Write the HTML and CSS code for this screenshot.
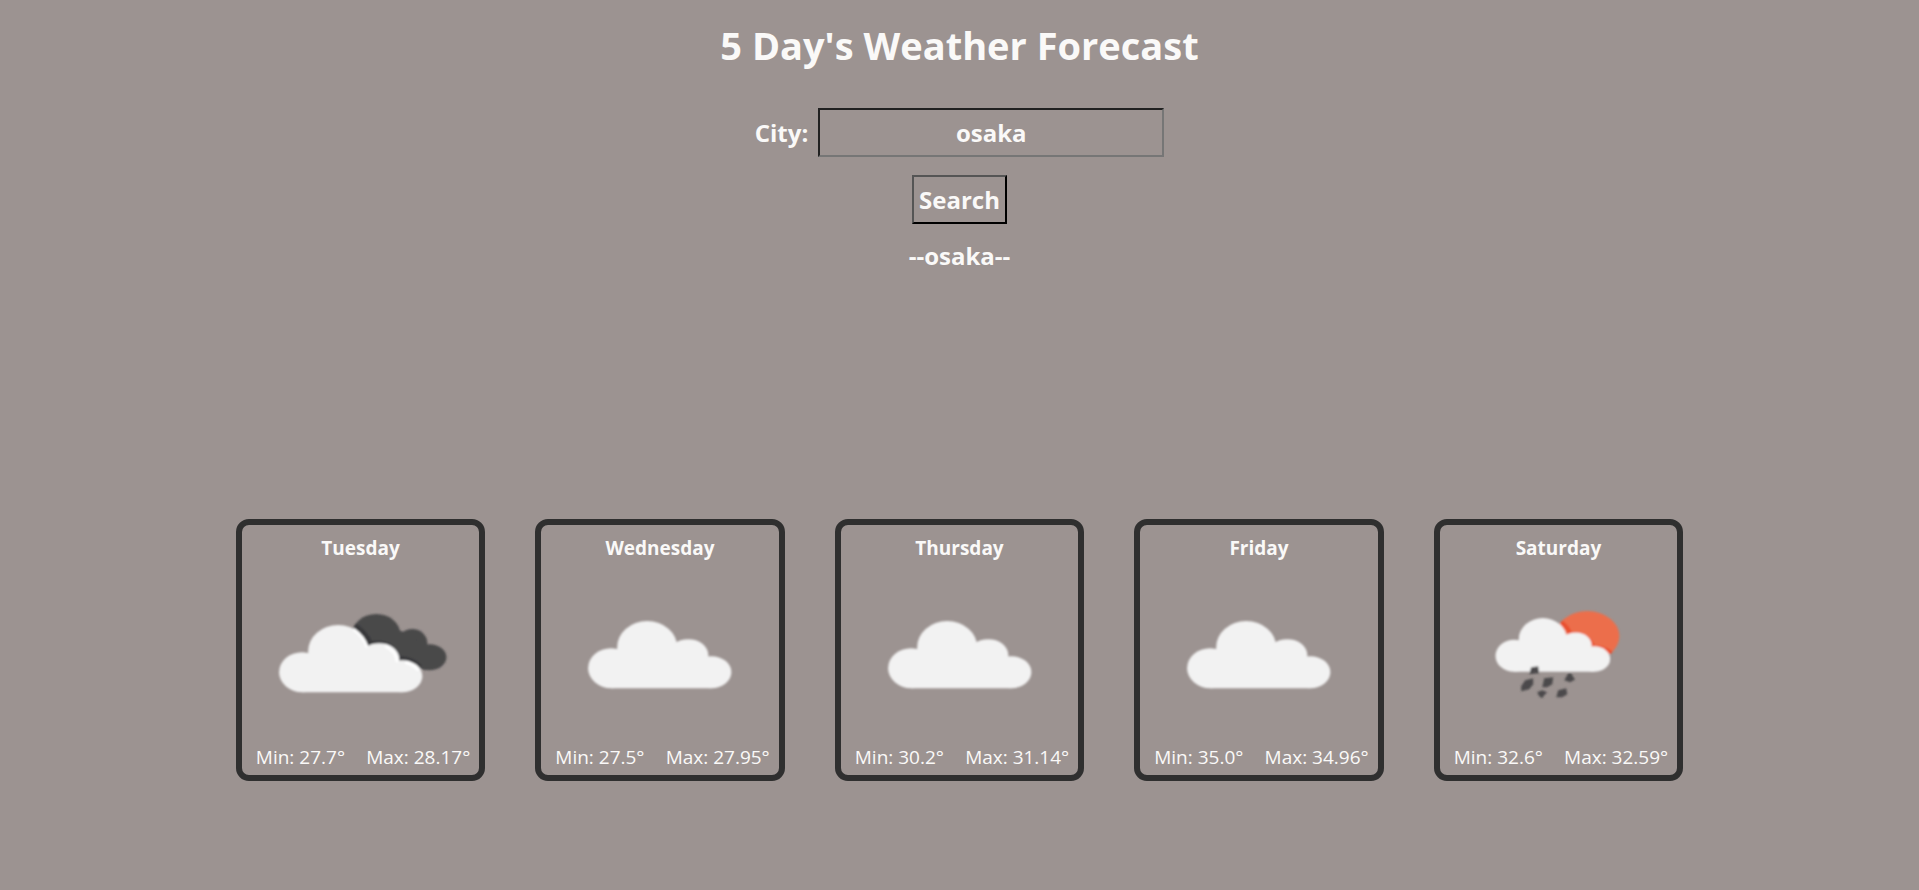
FILE: index.html
```html
<!DOCTYPE html>
<html lang="en">
<head>
<meta charset="utf-8">
<title>5 Day's Weather Forecast</title>
<link rel="stylesheet" href="styles.css">
</head>
<body>
<svg class="defs" aria-hidden="true">
  <defs>
    <filter id="soft" x="-10%" y="-10%" width="120%" height="120%"><feGaussianBlur stdDeviation="1"/></filter>
    <g id="cloud">
      <ellipse cx="61" cy="107" rx="23" ry="20"/>
      <ellipse cx="97" cy="86" rx="30" ry="26"/>
      <ellipse cx="138" cy="94" rx="20" ry="16"/>
      <ellipse cx="161" cy="111" rx="20" ry="16"/>
      <path d="M61 127V88H70L80 84H120L140 92L158 97L161 127Z"/>
    </g>
  </defs>
</svg>
<main class="page">
  <h1 class="title">5 Day's Weather Forecast</h1>
  <form class="search" onsubmit="return false">
    <div class="field">
      <label for="city">City:</label>
      <input class="city" id="city" type="text" value="osaka">
    </div>
    <button class="submit" type="submit">Search</button>
  </form>
  <h2 class="place">--osaka--</h2>
  <section class="forecast">
    <article class="card">
      <h3 class="day">Tuesday</h3>
      <svg class="icon" viewBox="1 6 237 176" role="img" aria-label="Broken clouds">
        <g filter="url(#soft)">
          <g fill="#48484a">
            <ellipse cx="135" cy="69" rx="24" ry="20"/>
            <ellipse cx="171" cy="78" rx="15" ry="14"/>
            <ellipse cx="188" cy="92" rx="17" ry="13"/>
            <path d="M112 68L150 62L160 66L184 80V105L158 96L126 80Z"/>
          </g>
          <path d="M113 61Q124 68 129 79Q150 76 157 94Q171 94 178 102" fill="none" stroke="#37373a" stroke-width="6"/>
          <use href="#cloud" fill="#f2f2f2"/>
          <path d="M112 64Q122 71 126 82M144 81Q155 86 156 97M164 97Q172 99 177 105" fill="none" stroke="#fff" stroke-width="3"/>
        </g>
      </svg>
      <p class="temps"><span>Min: 27.7°</span><span>Max: 28.17°</span></p>
    </article>
    <article class="card">
      <h3 class="day">Wednesday</h3>
      <svg class="icon" viewBox="1 6 237 176" role="img" aria-label="Clouds">
        <g filter="url(#soft)"><use href="#cloud" x="10" y="-4" fill="#f2f2f2"/></g>
      </svg>
      <p class="temps"><span>Min: 27.5°</span><span>Max: 27.95°</span></p>
    </article>
    <article class="card">
      <h3 class="day">Thursday</h3>
      <svg class="icon" viewBox="1 6 237 176" role="img" aria-label="Clouds">
        <g filter="url(#soft)"><use href="#cloud" x="10" y="-4" fill="#f2f2f2"/></g>
      </svg>
      <p class="temps"><span>Min: 30.2°</span><span>Max: 31.14°</span></p>
    </article>
    <article class="card">
      <h3 class="day">Friday</h3>
      <svg class="icon" viewBox="1 6 237 176" role="img" aria-label="Clouds">
        <g filter="url(#soft)"><use href="#cloud" x="10" y="-4" fill="#f2f2f2"/></g>
      </svg>
      <p class="temps"><span>Min: 35.0°</span><span>Max: 34.96°</span></p>
    </article>
    <article class="card">
      <h3 class="day">Saturday</h3>
      <svg class="icon" viewBox="1 6 237 176" role="img" aria-label="Rain with sun">
        <g filter="url(#soft)">
          <ellipse cx="148" cy="71" rx="32" ry="25" fill="#ec6e4c"/>
          <path d="M122 57Q129 62 131 69Q148 67 154 82Q166 82 172 88" fill="none" stroke="#e9502f" stroke-width="4"/>
          <use href="#cloud" transform="translate(26 5) scale(.8 .8)" fill="#f2f2f2"/>
          <g fill="#4b4a4b">
            <path d="M92 102L99 101L100 108L90 109Z"/>
            <path d="M86 115L94 113L94 119L90 124L82 126V121Z"/>
            <path d="M105 113L114 112L113 119L108 122L103 122Z"/>
            <path d="M98 127L103 125L108 127L105 130L103 133L100 131Z"/>
            <path d="M119 125L127 123L128 129L123 132L117 132Z"/>
            <path d="M129 108L132 108L134 112L136 114L131 117L125 115Z"/>
          </g>
        </g>
      </svg>
      <p class="temps"><span>Min: 32.6°</span><span>Max: 32.59°</span></p>
    </article>
  </section>
</main>
</body>
</html>
```
FILE: styles.css
```css
* {
  box-sizing: border-box;
}

body {
  margin: 0;
  background: #9c9391;
  color: #faf9f8;
  font-family: "Segoe UI", "Open Sans", "Noto Sans", sans-serif;
}

.defs {
  position: absolute;
  width: 0;
  height: 0;
}

.page {
  display: flex;
  flex-direction: column;
  align-items: center;
  padding-top: 18px;
}

.title {
  margin: 0;
  font-size: 38px;
  line-height: 54px;
}

.search {
  display: flex;
  flex-direction: column;
  align-items: center;
  gap: 18px;
  margin-top: 36px;
  font-size: 24px;
  font-weight: 700;
}

.field {
  display: flex;
  align-items: center;
  gap: 10px;
}

.city,
.submit {
  height: 49px;
  background: transparent;
  color: inherit;
  font: inherit;
}

.city {
  width: 346px;
  border: 2px solid;
  border-color: #212121 #767676 #767676 #212121;
  text-align: center;
}

.submit {
  padding: 0 5px;
  border: 2px solid;
  border-color: #555 #000 #000 #555;
}

.place {
  margin: 16px 0 0;
  font-size: 24px;
  line-height: 32px;
}

.forecast {
  display: flex;
  justify-content: center;
  gap: 50px;
  width: 100%;
  margin-top: 247px;
}

.card {
  width: 13%;
  border: 6px solid #2f2f2f;
  border-radius: 13px;
}

.day {
  margin: 10px 0;
  font-size: 19px;
  line-height: 26px;
  text-align: center;
}

.icon {
  display: block;
  width: 100%;
}

.temps {
  display: flex;
  justify-content: space-between;
  margin: 0;
  padding: 0 9px 8px 14px;
  font-size: 19px;
  line-height: 20px;
  white-space: nowrap;
}
```
